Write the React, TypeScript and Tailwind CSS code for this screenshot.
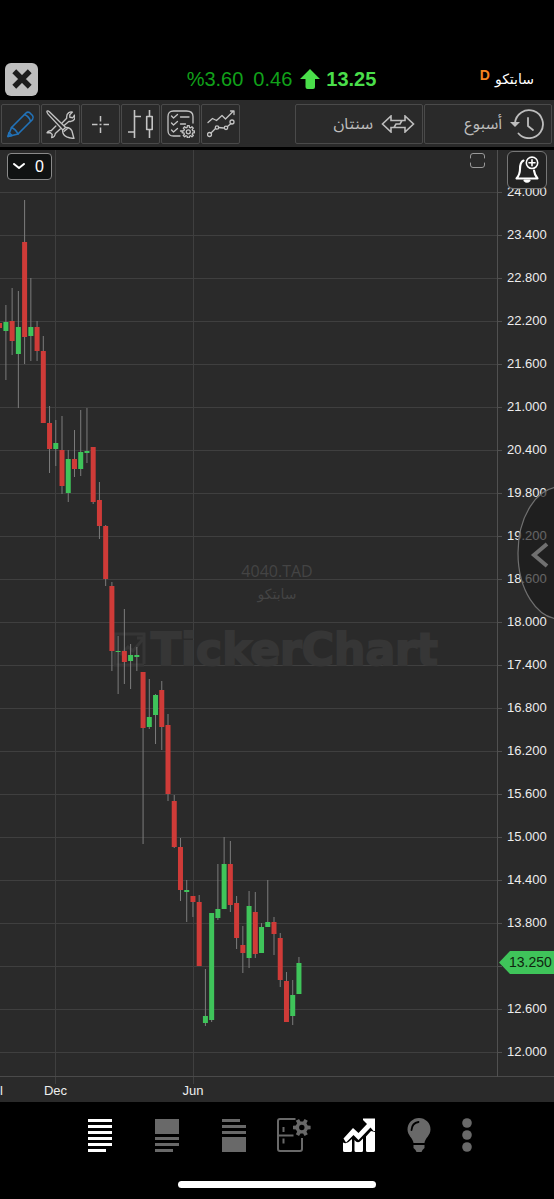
import React from "react";

type Candle = [high: number, top: number, bottom: number, low: number, up: 0 | 1];

const CANDLES: Candle[] = [
  [305, 322, 331, 380, 1], [288, 321, 341, 355, 0], [291, 327, 354, 408, 1], [200, 242, 337, 364, 0],
  [278, 327, 336, 361, 1], [321, 327, 351, 361, 0], [336, 351, 423, 423, 0], [406, 423, 449, 473, 0],
  [420, 443, 449, 466, 1], [416, 450, 486, 494, 0], [450, 459, 493, 502, 1], [430, 459, 469, 477, 0],
  [410, 452, 469, 476, 1], [408, 451, 453, 463, 1], [447, 447, 502, 504, 0], [482, 500, 526, 539, 0],
  [525, 526, 579, 586, 0], [582, 586, 651, 671, 0], [636, 651, 652, 694, 1], [609, 651, 662, 684, 0],
  [644, 655, 661, 689, 1], [647, 655, 657, 671, 1], [672, 672, 728, 844, 0], [679, 717, 727, 729, 1],
  [694, 695, 715, 744, 1], [681, 690, 727, 750, 0], [714, 725, 794, 801, 0], [795, 801, 847, 848, 0],
  [838, 847, 890, 901, 0], [880, 890, 892, 922, 1], [896, 896, 902, 917, 0], [895, 902, 966, 966, 0],
  [969, 1016, 1023, 1026, 1], [913, 913, 1020, 1022, 1], [864, 909, 918, 920, 1], [837, 864, 909, 909, 1],
  [841, 864, 905, 912, 0], [896, 903, 938, 949, 0], [926, 945, 953, 973, 0], [891, 906, 958, 968, 1],
  [892, 912, 954, 958, 0], [923, 927, 953, 953, 1], [880, 922, 927, 927, 1], [917, 922, 934, 955, 0],
  [933, 938, 980, 987, 0], [972, 981, 1022, 1022, 0], [980, 995, 1016, 1025, 1], [957, 963, 994, 994, 1],
];

const GRID = Array.from({ length: 21 }, (_, i) => ({ y: 192 + i * 43, price: 24 - i * 0.6 }));

function gearPath(cx: number, cy: number, outer: number, inner: number, teeth = 8) {
  const step = (Math.PI * 2) / teeth;
  const at = (r: number, a: number) => `${(cx + r * Math.cos(a)).toFixed(2)} ${(cy + r * Math.sin(a)).toFixed(2)}`;
  let d = "";
  for (let i = 0; i < teeth; i++) {
    const a = i * step;
    d += `${i ? "L" : "M"}${at(inner, a - step * 0.3)}L${at(outer, a - step * 0.2)}L${at(outer, a + step * 0.2)}L${at(inner, a + step * 0.3)}`;
  }
  return d + "Z";
}

const stroke = { fill: "none", stroke: "currentColor", strokeLinecap: "round", strokeLinejoin: "round" } as const;

const PencilIcon = () => (
  <svg width="28" height="28" viewBox="0 0 28 28" {...stroke} strokeWidth="1.6">
    <path d="M1 26.5 4.5 17.5 19 3q1.5-1.500 3.500-.5l3 3q1.500 2 0 4L11 24Z" />
    <path d="M4.500 17.500q4 1.500 6.500 6.500M17.500 4.500q4.500 2 6 6.500M1 26.500l4-1-3-3Z" />
  </svg>
);

const ToolsIcon = () => (
  <svg width="29" height="29" viewBox="0 0 28 28" {...stroke} strokeWidth="1.3">
    <path d="M9.500 15.500 5 20q-3-.500-4 2l3-.300 2 2-.500 3q3-.500 3.500-4l5-4.500M15.500 12.500 20 8q-.500-4 2-5.500 2-1 3.500-.500L23 4.500v2.500l3 .500 1.500-2.500q1.500 5-3.500 6-1 .300-2 0l-4.500 4" />
    <path className="fill-[#2a2a2a]" d="M1 1q1-.500 2.500 1L19 17l-2.500 2.500L2 4Q.500 2 1 1Z" />
    <path className="fill-[#2a2a2a]" d="M16 19.500 19 17q4-.500 6 3 1 4 2 7.500-4-.300-7-1.500-4-2-4-6.500Z" />
    <path d="M17.500 20.500 20.500 18" />
  </svg>
);

const CrosshairIcon = () => (
  <svg width="17" height="17" viewBox="0 0 17 17" {...stroke} strokeLinecap="butt" strokeWidth="1.5">
    <path d="M8.500 0v5.500M8.500 11.500V17M0 8.500h5.500M11.500 8.500H17M7.500 8.500h2" />
  </svg>
);

const BarsIcon = () => (
  <svg width="25" height="28" viewBox="0 0 25 28" {...stroke} strokeLinecap="butt" strokeWidth="1.6">
    <path d="M6.500 0v28M6.500 6.500H13M0 22h6.500M21.500 0v6.500M21.500 19.500V28M18.700 6.500h5.500v13h-5.500Z" />
  </svg>
);

const ChecklistIcon = () => (
  <svg width="28" height="28" viewBox="0 0 28 28" {...stroke} strokeWidth="1.3">
    <path d="M13 26H6.500Q1 26 1 20.500V6.500Q1 1 6.500 1h13Q26 1 26 6.500V13" />
    <path d="m4.500 6 2 2 4-3.500M4.500 13l2 2 4-3.500M4.500 20l2 2 4-3.500M13.500 7h8.500M13.500 14h5M13.500 21h1" />
    <path d={gearPath(21.3, 21.8, 6.2, 4.6)} />
    <circle cx="21.3" cy="21.8" r="2" />
  </svg>
);

const TrendIcon = () => (
  <svg width="28" height="28" viewBox="0 0 28 28" {...stroke} strokeWidth="1.3">
    <path d="m1 12.500 4.500-4 4 2 5.500-5 3.500 3.500 7.500-7.500M23.500 1H27v3.500" />
    <path d="m4 23 4.500-4.500M11.500 17.500l5 .500M20.500 16.500l3.500-3" />
    <circle cx="2.500" cy="24.500" r="2" /><circle cx="10" cy="17.500" r="1.700" />
    <circle cx="19" cy="17.800" r="1.700" /><circle cx="25" cy="12" r="2" />
  </svg>
);

const SpanIcon = () => (
  <svg width="34" height="18" viewBox="0 0 34 18" {...stroke} strokeLinejoin="miter" strokeWidth="1.6">
    <path d="M16 12.500h-6V17L1.500 9 10 1v4.500h11L19 9h-4l-2 3.500M18 5.500h6V1l8.500 8-8.500 8v-4.500H13" />
  </svg>
);

const HistoryIcon = () => (
  <svg width="34" height="30" viewBox="0 0 34 30" {...stroke} strokeWidth="1.8">
    <path d="M5 14A14 14 0 1 1 8.500 24.500" />
    <path fill="currentColor" stroke="none" d="M0 13h10l-5 5Z" />
    <path d="M18 9v8l5 4" />
  </svg>
);

const LinesIcon = ({ block }: { block?: "top" | "bottom" }) => (
  <svg width="24" height="33" viewBox="0 0 24 33" fill="currentColor">
    {block === "top" && <path d="M0 0h24v15H0ZM0 18h24v3H0ZM0 24h24v3H0ZM0 30h18v3H0Z" />}
    {block === "bottom" && <path d="M0 0h18v3H0ZM0 6h24v3H0ZM0 12h24v3H0ZM0 18h24v15H0Z" />}
    {!block && <path d="M0 0h24v3H0ZM0 6h24v3H0ZM0 12h24v3H0ZM0 18h24v3H0ZM0 24h24v3H0ZM0 30h18v3H0Z" />}
  </svg>
);

const CabinetIcon = () => (
  <svg width="34" height="34" viewBox="0 0 34 34" fill="none" stroke="currentColor" strokeWidth="2">
    <path d="M18.500 1H3Q1 1 1 3v28q0 2 2 2h20q2 0 2-2V20M1 17.500h15.500M6.500 9v5M6.500 20.500v5" />
    <path d={gearPath(24.8, 9.5, 9, 6.2, 6)} fill="currentColor" stroke="none" />
    <circle cx="24.8" cy="9.5" r="2.700" className="fill-black" stroke="none" />
  </svg>
);

const GrowthIcon = () => (
  <svg width="34" height="34" viewBox="0 0 34 34" fill="currentColor">
    <path d="M1 24.500q3 1.500 5.500-.500L10 21v11.500q0 1.500-1.500 1.500h-6Q1 34 1 32.500ZM12.500 22q3 4 6 1l2.500-2.500v12Q21 34 19.500 34H14Q12.500 34 12.500 32.500ZM24 18.500l5-5.500 4 1v18.500Q33 34 31.500 34h-6Q24 34 24 32.500Z" />
    <path d="M1.500 20.500 11 10l5.500 5L25 6 21 2V.500h12V13h-1.500L28.500 9.500l-12 12.500-5-5-7.500 7.500Z" />
  </svg>
);

const BulbIcon = () => (
  <svg width="24" height="34" viewBox="0 0 24 34" fill="currentColor">
    <path d="M12 0a11.500 11.500 0 0 1 11.500 11.500c0 6-5.500 8.500-6 13.500h-11c-.500-5-6-7.500-6-13.500A11.500 11.500 0 0 1 12 0ZM6.500 27h11v3l-2 2-1 2h-5l-1-2-2-2Z" />
    <path d="M4.500 12q.500-7 7-8" fill="none" className="stroke-black" strokeWidth="1.800" strokeLinecap="round" />
  </svg>
);

const DotsIcon = () => (
  <svg width="10" height="34" viewBox="0 0 10 34" fill="currentColor">
    <circle cx="5" cy="5" r="4.800" /><circle cx="5" cy="17" r="4.800" /><circle cx="5" cy="29" r="4.800" />
  </svg>
);

const BellIcon = () => (
  <svg width="24" height="28" viewBox="0 0 24 28" {...stroke} strokeWidth="2.1">
    <path d="M8.500 4.500C5.500 6 5 9 5 13q0 5.500-3.500 9.500h21Q19.500 18.500 19 14.500" />
    <path d="M9.500 24.500q2.500 2.500 5 0Z" fill="currentColor" />
    <circle cx="17" cy="6.800" r="5.700" strokeWidth="1.600" />
    <path d="M17 3.800v6M14 6.800h6" strokeWidth="1.600" />
  </svg>
);

function ToolButton({ label, className = "text-[#c4c4c4]", children }: { label: string; className?: string; children: React.ReactNode }) {
  return (
    <button aria-label={label} className={`flex h-10 w-[39px] items-center justify-center rounded-xs border border-[#4a4a4a] ${className}`}>
      {children}
    </button>
  );
}

function PeriodButton({ text, children }: { text: string; children: React.ReactNode }) {
  return (
    <button className="flex h-10 w-32 items-center justify-end gap-2 rounded-xs border border-[#4a4a4a] pr-[7px] text-[#bdbdbd]">
      <span dir="rtl" className="font-['Noto_Sans_Arabic','DejaVu_Sans',sans-serif] text-base leading-6">{text}</span>
      {children}
    </button>
  );
}

function Chart() {
  return (
    <svg className="block h-[952px] w-full font-['Liberation_Sans',Arial,sans-serif]" role="img" aria-label="4040.TAD">
      <g transform="translate(0 -150)">
        <g className="stroke-[#3f3f3f]" shapeRendering="crispEdges">
          <svg x="-52" y="0" overflow="visible">
            {GRID.map(({ y }) => <line key={y} x1="0" x2="100%" y1={y} y2={y} />)}
          </svg>
          <line x1="55.5" x2="55.5" y1="150" y2="1084" />
          <line x1="193.5" x2="193.5" y1="150" y2="1084" />
          <line className="stroke-[#4a4a4a]" x1="0" x2="100%" y1="1076.5" y2="1076.5" />
        </g>

        <g className="fill-[#444444]" textAnchor="middle">
          <text x="50%" y="577" className="font-['Open_Sans','Noto_Sans',sans-serif] text-base">4040.TAD</text>
          <text x="50%" y="599" className="font-['DejaVu_Sans',sans-serif] text-sm">سابتكو</text>
        </g>
        <svg x="50%" y="632" overflow="visible">
          <text x="-126" y="33" strokeWidth="2" className="fill-[#363636] stroke-[#363636] font-['DejaVu_Sans',sans-serif] text-[44px] font-bold">TickerChart</text>
          <g fill="none" className="stroke-[#363636]" strokeWidth="3">
            <path d="M-133 32V2h-29v31h29M-157 23l8-8 5 4 10-12M-140 6h7v7" />
          </g>
        </svg>

        <rect x="0" y="323" width="2" height="5" className="fill-[#cf3b38]" />
        {CANDLES.map(([high, top, bottom, low, up], i) => {
          const x = 5.9 + i * 6.235;
          return (
            <g key={i}>
              <line x1={x} x2={x} y1={high} y2={low} className="stroke-[#7c7c7c]" />
              <rect x={x - 2.5} y={top} width="5" height={bottom - top} className={up ? "fill-[#3fc45a]" : "fill-[#cf3b38]"} />
            </g>
          );
        })}

        <svg x="100%" y="0" overflow="visible">
          <rect x="-56" y="150" width="56" height="926" className="fill-[#2a2a2a]" />
          <line x1="-56.5" x2="-56.5" y1="150" y2="1077" className="stroke-[#505050]" />
          <g className="fill-[#ededed] text-[13px]">
            {GRID.map(({ y, price }) => (
              <g key={y}>
                <line x1="-56" x2="-52" y1={y + 0.5} y2={y + 0.5} className="stroke-[#505050]" />
                {y !== 966 && <text x="-47" y={y + 4}>{price.toFixed(3)}</text>}
              </g>
            ))}
          </g>
          <path d="M-55 962.5-44 951H0v23H-44Z" className="fill-[#3fc45a]" />
          <text x="-45" y="967" className="fill-[#10240f] text-sm">13.250</text>
        </svg>

        <g className="fill-[#ededed] text-[13px]" textAnchor="middle">
          <text x="0" y="1095" textAnchor="start">l</text>
          <text x="55.5" y="1095">Dec</text>
          <text x="193" y="1095">Jun</text>
        </g>
      </g>
    </svg>
  );
}

export default function App() {
  return (
    <div className="flex min-h-screen flex-col bg-black font-['Liberation_Sans',Arial,sans-serif]">
      <header className="grid grid-cols-[1fr_auto_1fr] items-center pt-[60px] pr-5 pb-[2px] pl-[5px]">
        <button aria-label="إغلاق" className="flex h-[33px] w-[33px] items-center justify-center rounded-md bg-[#bebebe] text-[#1c1c1c]">
          <svg width="20" height="20" viewBox="0 0 22 22" fill="none" stroke="currentColor" strokeWidth="6">
            <path d="m2.500 2.500 17 17M19.500 2.500l-17 17" />
          </svg>
        </button>
        <div className="flex items-center pl-6 text-xl leading-[38px] text-[#11a11a]">
          <span>%3.60</span>
          <span className="ml-[10px]">0.46</span>
          <svg className="ml-2 text-[#4ade4a]" width="20" height="20" viewBox="0 0 20 20" fill="currentColor">
            <path d="M10 0 20 10h-5v8q0 2-2 2H7.500q-2 0-2-2v-8H0Z" />
          </svg>
          <span className="ml-[6px] font-bold text-[#4ade4a]">13.25</span>
        </div>
        <div className="flex items-center justify-end gap-[5px]">
          <span className="pb-2 text-sm leading-5 font-bold text-[#f58220]">D</span>
          <span dir="rtl" className="font-['DejaVu_Sans',sans-serif] text-sm leading-5 text-white">سابتكو</span>
        </div>
      </header>

      <nav className="flex items-center justify-between border-b-3 border-black bg-[#2a2a2a] py-[3px] pr-[2px] pl-[1px]">
        <div className="flex gap-[1px] pt-[1px]">
          <ToolButton label="رسم" className="text-[#2272b8]"><PencilIcon /></ToolButton>
          <ToolButton label="أدوات"><ToolsIcon /></ToolButton>
          <ToolButton label="مؤشر"><CrosshairIcon /></ToolButton>
          <ToolButton label="نوع الرسم"><BarsIcon /></ToolButton>
          <ToolButton label="إعدادات"><ChecklistIcon /></ToolButton>
          <ToolButton label="مؤشرات"><TrendIcon /></ToolButton>
        </div>
        <div className="flex gap-[1px] pt-[1px]">
          <PeriodButton text="سنتان"><SpanIcon /></PeriodButton>
          <PeriodButton text="أسبوع"><HistoryIcon /></PeriodButton>
        </div>
      </nav>

      <main className="relative overflow-hidden bg-[#2a2a2a]">
        <Chart />
        <button className="absolute top-[3px] left-[7px] flex h-[27px] w-[45px] items-center justify-between rounded border border-[#8a8a8a] bg-[#101212] pr-[7px] pl-[5px] text-base text-white">
          <svg width="12" height="7" viewBox="0 0 12 7" {...stroke} strokeWidth="2"><path d="m1 1 5 4 5-4" /></svg>
          0
        </button>
        <button aria-label="ملء الشاشة" className="absolute top-[3px] right-[69px] text-[#999999]">
          <svg width="15" height="15" viewBox="0 0 15 15" {...stroke}>
            <path d="M.500 5V3Q.500.500 3 .500h9q2.500 0 2.500 2.500v2M.500 10v2q0 2.500 2.500 2.500h9q2.500 0 2.500-2.500v-2" />
          </svg>
        </button>
        <button aria-label="تنبيه جديد" className="absolute top-[1px] right-[7px] flex h-[38px] w-10 items-center justify-center rounded-md border border-[#777777] bg-[#222222] text-white">
          <BellIcon />
        </button>
        <button aria-label="فتح القائمة" className="absolute top-[336px] right-0 text-[#707070]">
          <svg width="37" height="134" viewBox="0 0 37 134" fill="none" stroke="currentColor">
            <ellipse cx="43" cy="67" rx="42" ry="66" className="fill-[#1a1a1a]/65" strokeWidth="1.2" />
            <path d="M30 58 17 69l13 11" strokeWidth="4" />
          </svg>
        </button>
      </main>

      <footer className="flex flex-1 flex-col items-center justify-between pt-4 pb-[11px]">
        <nav className="flex items-center gap-[31px] pl-[6px] text-[#696969]">
          <div className="flex items-center gap-[43px]">
            <button aria-label="قائمة" className="text-white"><LinesIcon /></button>
            <button aria-label="تقسيم علوي"><LinesIcon block="top" /></button>
            <button aria-label="تقسيم سفلي"><LinesIcon block="bottom" /></button>
          </div>
          <button aria-label="الإعدادات"><CabinetIcon /></button>
          <button aria-label="الرسم البياني" className="text-white"><GrowthIcon /></button>
          <button aria-label="أفكار"><BulbIcon /></button>
          <button aria-label="المزيد"><DotsIcon /></button>
        </nav>
        <div className="h-[7px] w-[198px] rounded-full bg-white" />
      </footer>
    </div>
  );
}
